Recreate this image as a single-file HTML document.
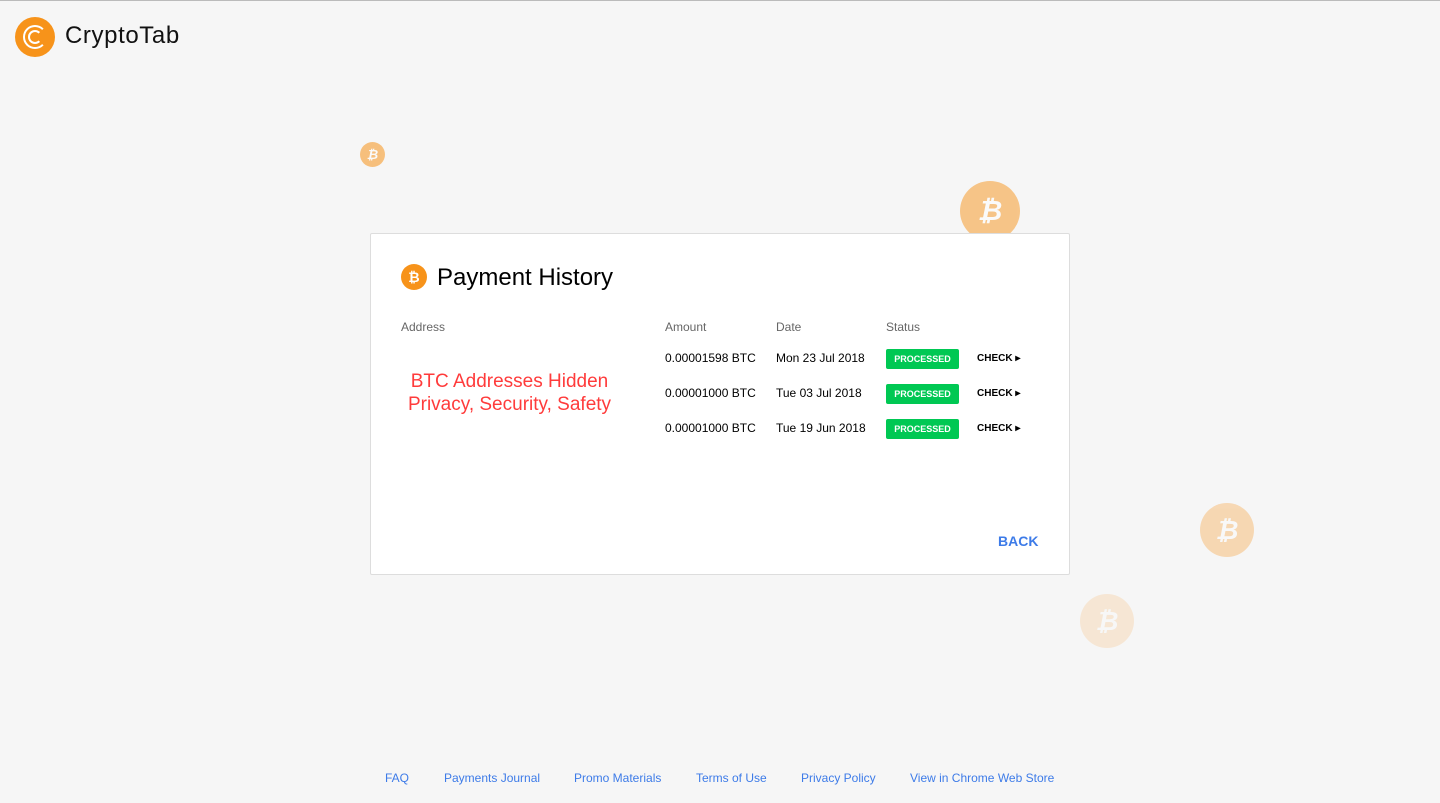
<!DOCTYPE html>
<html><head><style>
body{margin:0;width:1440px;height:803px;background:#f6f6f6;font-family:"Liberation Sans",sans-serif;position:relative;overflow:hidden}
.a{position:absolute}
.coin{position:absolute;border-radius:50%;background:#f7931a;color:#fff;font-weight:bold;text-align:center;font-style:italic}
.t{font-size:12px;color:#000}
.h{font-size:12px;color:#666}
.b{position:absolute;left:886px;width:73px;height:20px;background:#00c853;color:#fff;font-size:9px;font-weight:bold;line-height:20px;text-align:center;border-radius:2px}
.c{position:absolute;left:977px;font-size:10px;font-weight:bold}
.f{position:absolute;top:771px;font-size:12px;color:#3d7be8}
</style></head><body>
<div class="a" style="top:0;left:0;width:1440px;height:1px;background:#bbb"></div>
<div class="a" style="left:15px;top:17px;width:40px;height:40px;border-radius:50%;background:#f7931a"></div>
<div class="a" style="left:23px;top:25px;width:24px;height:24px;border:2.5px solid #fff;border-right-color:transparent;border-radius:50%;box-sizing:border-box;transform:rotate(0deg)"></div>
<div class="a" style="left:28px;top:30px;width:14px;height:14px;border:2.5px solid #fff;border-right-color:transparent;border-radius:50%;box-sizing:border-box"></div>
<div class="a" style="left:65px;top:22px;font-size:24px;color:#111;letter-spacing:0.6px">CryptoTab</div>
<div class="coin" style="left:360px;top:142px;width:25px;height:25px;line-height:25px;font-size:13px;opacity:.55">₿</div>
<div class="coin" style="left:960px;top:181px;width:60px;height:60px;line-height:60px;font-size:28px;opacity:.5">₿</div>
<div class="coin" style="left:1200px;top:503px;width:54px;height:54px;line-height:54px;font-size:26px;opacity:.3">₿</div>
<div class="coin" style="left:1080px;top:594px;width:54px;height:54px;line-height:54px;font-size:26px;opacity:.15">₿</div>
<div class="a" style="left:370px;top:233px;width:698px;height:340px;background:#fff;border:1px solid #ddd;border-radius:2px"></div>
<div class="coin" style="left:401px;top:264px;width:26px;height:26px;line-height:26px;font-size:14px;font-style:normal">₿</div>
<div class="a" style="left:437px;top:264px;font-size:24px">Payment History</div>
<div class="a h" style="left:401px;top:320px">Address</div>
<div class="a h" style="left:665px;top:320px">Amount</div>
<div class="a h" style="left:776px;top:320px">Date</div>
<div class="a h" style="left:886px;top:320px">Status</div>
<div class="a" style="left:396px;top:370px;width:227px;text-align:center;font-size:19px;color:#ff3b3b;line-height:23px">BTC Addresses Hidden<br>Privacy, Security, Safety</div>
<div class="a t" style="left:665px;top:351px">0.00001598 BTC</div>
<div class="a t" style="left:776px;top:351px">Mon 23 Jul 2018</div>
<div class="b" style="top:349px">PROCESSED</div><div class="c" style="top:353px">CHECK ▸</div>
<div class="a t" style="left:665px;top:386px">0.00001000 BTC</div>
<div class="a t" style="left:776px;top:386px">Tue 03 Jul 2018</div>
<div class="b" style="top:384px">PROCESSED</div><div class="c" style="top:388px">CHECK ▸</div>
<div class="a t" style="left:665px;top:421px">0.00001000 BTC</div>
<div class="a t" style="left:776px;top:421px">Tue 19 Jun 2018</div>
<div class="b" style="top:419px">PROCESSED</div><div class="c" style="top:423px">CHECK ▸</div>
<div class="a" style="left:998px;top:533px;font-size:14px;font-weight:bold;color:#3d7be8">BACK</div>
<div class="f" style="left:385px">FAQ</div>
<div class="f" style="left:444px">Payments Journal</div>
<div class="f" style="left:574px">Promo Materials</div>
<div class="f" style="left:696px">Terms of Use</div>
<div class="f" style="left:801px">Privacy Policy</div>
<div class="f" style="left:910px">View in Chrome Web Store</div>
</body></html>
